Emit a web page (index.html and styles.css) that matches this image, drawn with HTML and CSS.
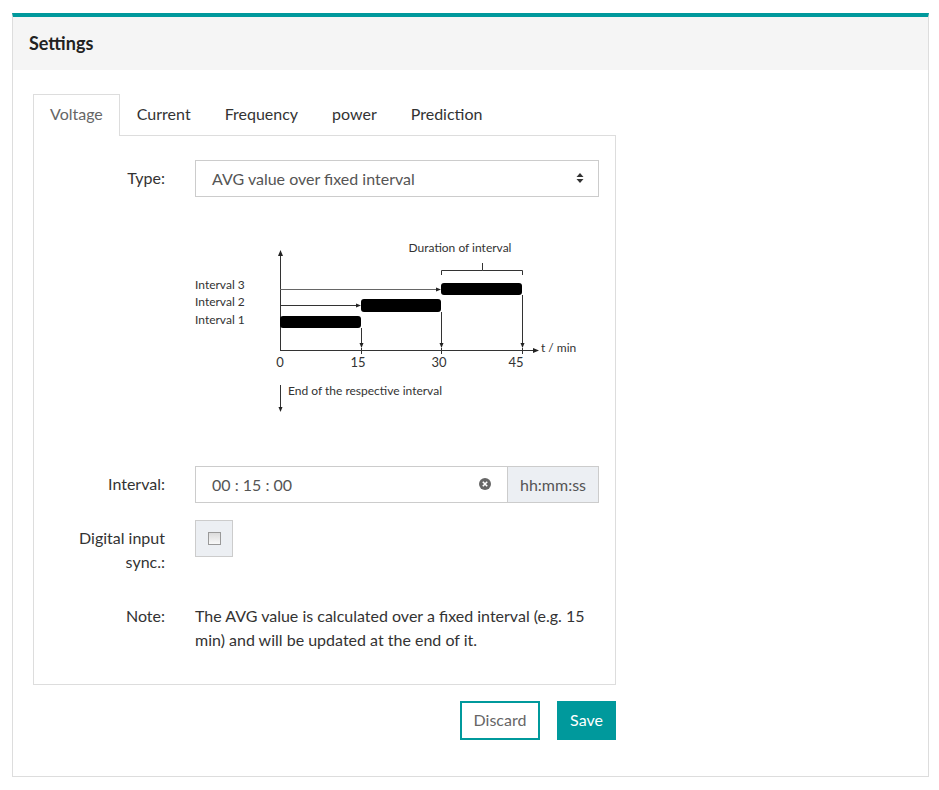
FILE: index.html
```html
<!DOCTYPE html>
<html lang="en">
<head>
    <meta charset="UTF-8">
    <meta name="viewport" content="width=device-width, initial-scale=1.0">
    <title>Settings</title>
    <link rel="stylesheet" href="styles.css">
</head>
<body>
    <div class="panel">
        <div class="panel-head">Settings</div>
        <div class="panel-body">
            <div class="tabs">
                <div class="tab active">Voltage</div>
                <div class="tab">Current</div>
                <div class="tab">Frequency</div>
                <div class="tab">power</div>
                <div class="tab">Prediction</div>
            </div>
            <div class="tab-content">
                <div class="row">
                    <label class="row-label">Type:</label>
                    <div class="select">
                        <span>AVG value over fixed interval</span>
                        <svg class="caret" width="8" height="12" viewBox="0 0 8 12">
                            <path d="M4 1 L7.5 5 H0.5 Z M4 11 L7.5 7 H0.5 Z" fill="#333"/>
                        </svg>
                    </div>
                </div>

                <div class="row">
                    <div class="row-label"></div>
                    <svg class="diagram" width="404" height="235" viewBox="0 0 404 235">
                        <g stroke="#333" stroke-width="1" fill="none">
                            <line x1="85.5" y1="40" x2="85.5" y2="137"/>
                            <line x1="85" y1="136.5" x2="340" y2="136.5"/>
                            <line x1="85" y1="75.5" x2="243" y2="75.5" stroke="#666"/>
                            <line x1="85" y1="91.5" x2="163" y2="91.5"/>
                            <line x1="166.5" y1="114" x2="166.5" y2="132"/>
                            <line x1="246.5" y1="98" x2="246.5" y2="132"/>
                            <line x1="327.5" y1="81" x2="327.5" y2="132"/>
                            <line x1="166.5" y1="134" x2="166.5" y2="140"/>
                            <line x1="246.5" y1="134" x2="246.5" y2="140"/>
                            <line x1="327.5" y1="134" x2="327.5" y2="140"/>
                            <path d="M246.5 61 V56.5 H287.5 V49 M287.5 56.5 H327.5 V61"/>
                            <line x1="85.5" y1="171" x2="85.5" y2="195"/>
                        </g>
                        <g fill="#222">
                            <path d="M85.5 36 L88 42 H83 Z"/>
                            <path d="M344 136.5 L338 134 V139 Z"/>
                            <path d="M246 75.5 L241 73.5 V77.5 Z"/>
                            <path d="M166 91.5 L161 89.5 V93.5 Z"/>
                            <path d="M166.5 134 L164.5 129 H168.5 Z"/>
                            <path d="M246.5 134 L244.5 129 H248.5 Z"/>
                            <path d="M327.5 134 L325.5 129 H329.5 Z"/>
                            <path d="M85.5 198 L83.5 193 H87.5 Z"/>
                        </g>
                        <g fill="#000">
                            <rect x="85" y="102" width="81" height="12" rx="3"/>
                            <rect x="166" y="85" width="80" height="13" rx="3"/>
                            <rect x="246" y="69" width="81" height="12" rx="3"/>
                        </g>
                        <g class="dia-text">
                            <text x="0" y="75">Interval 3</text>
                            <text x="0" y="92">Interval 2</text>
                            <text x="0" y="110">Interval 1</text>
                            <text x="265" y="38" text-anchor="middle">Duration of interval</text>
                            <text x="346" y="138">t / min</text>
                            <text class="tick" x="85" y="153" text-anchor="middle">0</text>
                            <text class="tick" x="163" y="153" text-anchor="middle">15</text>
                            <text class="tick" x="244" y="153" text-anchor="middle">30</text>
                            <text class="tick" x="321" y="153" text-anchor="middle">45</text>
                            <text x="93" y="181">End of the respective interval</text>
                        </g>
                    </svg>
                </div>

                <div class="row">
                    <label class="row-label">Interval:</label>
                    <div class="input-group">
                        <div class="input">
                            <span>00 : 15 : 00</span>
                            <svg class="clear" width="12" height="12" viewBox="0 0 12 12">
                                <circle cx="6" cy="6" r="6" fill="#666"/>
                                <path d="M3.8 3.8 L8.2 8.2 M8.2 3.8 L3.8 8.2" stroke="#fff" stroke-width="1.6"/>
                            </svg>
                        </div>
                        <div class="addon">hh:mm:ss</div>
                    </div>
                </div>

                <div class="row">
                    <label class="row-label">Digital input sync.:</label>
                    <div class="check-box"><span class="check"></span></div>
                </div>

                <div class="row note">
                    <div class="row-label">Note:</div>
                    <div class="note-text">The AVG value is calculated over a fixed interval (e.g. 15 min) and will be updated at the end of it.</div>
                </div>
            </div>
            <div class="actions">
                <button class="btn btn-outline">Discard</button>
                <button class="btn btn-primary">Save</button>
            </div>
        </div>
    </div>
</body>
</html>
```

FILE: styles.css
```css
body {
    margin: 0;
    padding: 13px 10px 12px 12px;
    font-family: Lato, "Open Sans", sans-serif;
    font-size: 16px;
    color: #333;
    background: #fff;
}
.panel {
    border: 1px solid #ddd;
    border-top: 4px solid #00999c;
}
.panel-head {
    background: #f5f5f5;
    height: 53px;
    line-height: 53px;
    padding-left: 16px;
    font-size: 18px;
    font-weight: bold;
    color: #222;
}
.panel-body {
    padding: 24px 20px 36px 20px;
}
.tabs {
    display: flex;
    width: 583px;
}
.tab {
    height: 41px;
    line-height: 38px;
    padding: 0 16px;
    border: 1px solid transparent;
    border-bottom: none;
    box-sizing: border-box;
}
.tab.active {
    border-color: #ddd;
    color: #666;
    background: #fff;
    position: relative;
    z-index: 1;
    margin-bottom: -1px;
    height: 42px;
}
.tab-content {
    width: 583px;
    box-sizing: border-box;
    border: 1px solid #ddd;
    padding: 24px 16px 8px 16px;
}
.row {
    display: grid;
    grid-template-columns: 115px 1fr;
    column-gap: 30px;
    margin-bottom: 17px;
}
.row-label {
    text-align: right;
    padding-top: 6px;
    line-height: 24px;
}
.select {
    height: 37px;
    box-sizing: border-box;
    border: 1px solid #ccc;
    display: flex;
    align-items: center;
    justify-content: space-between;
    padding: 0 14px 1px 16px;
    color: #555;
}
.diagram {
    display: block;
}
.dia-text text {
    font-family: Lato, "Open Sans", sans-serif;
    font-size: 12px;
    fill: #333;
}
.dia-text .tick {
    font-size: 13px;
}
.input-group {
    display: flex;
    height: 37px;
}
.input {
    flex: 1;
    border: 1px solid #ccc;
    display: flex;
    align-items: center;
    justify-content: space-between;
    padding: 0 16px 1px 16px;
    color: #555;
}
.addon {
    width: 91px;
    box-sizing: border-box;
    border: 1px solid #ccc;
    border-left: none;
    background: #eceff3;
    color: #555;
    display: flex;
    align-items: center;
    justify-content: center;
    padding-bottom: 1px;
}
.check-box {
    width: 38px;
    height: 37px;
    box-sizing: border-box;
    border: 1px solid #ccc;
    background: #eceff3;
    display: flex;
    align-items: center;
    justify-content: center;
}
.check {
    width: 11px;
    height: 11px;
    border: 1px solid #999;
    background: linear-gradient(#dcdcdc, #f8f8f8);
}
.note {
    margin-top: 30px;
    margin-bottom: 24px;
}
.note .row-label {
    padding-top: 0;
}
.note-text {
    line-height: 24px;
}
.actions {
    width: 583px;
    display: flex;
    justify-content: flex-end;
    gap: 17px;
    margin-top: 16px;
}
.btn {
    font-family: Lato, "Open Sans", sans-serif;
    font-size: 16px;
    height: 39px;
    padding: 0 0 3px 0;
    cursor: pointer;
}
.btn-outline {
    width: 80px;
    background: #fff;
    border: 2px solid #00999c;
    color: #666;
}
.btn-primary {
    width: 59px;
    background: #00999c;
    border: none;
    color: #fff;
}
```
